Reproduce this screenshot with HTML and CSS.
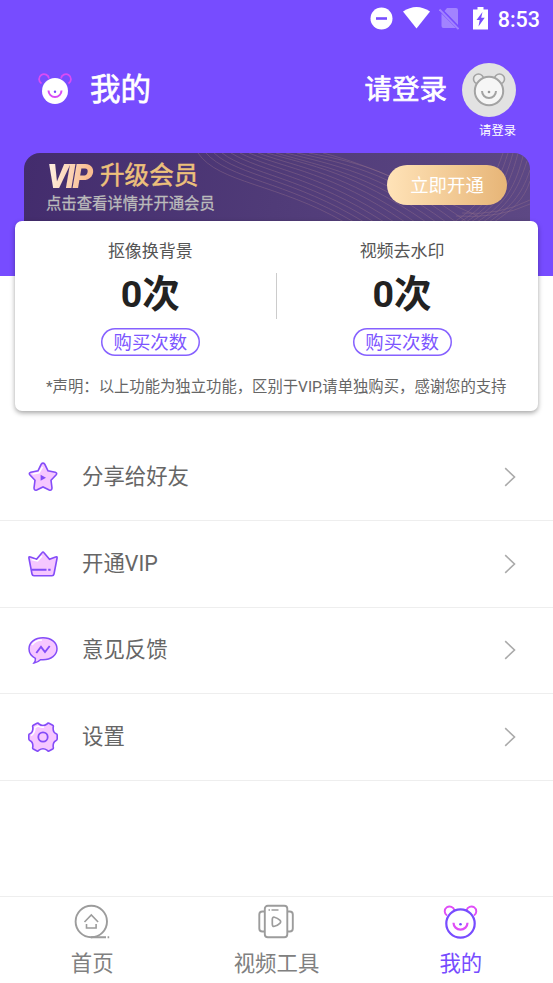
FILE: index.html
```html
<!DOCTYPE html>
<html lang="zh-CN">
<head>
<meta charset="utf-8">
<title>我的</title>
<link rel="stylesheet" href="styles.css">
</head>
<body>
<div class="hero">
  <div class="status">
    <svg class="dnd" width="23" height="23" viewBox="0 0 23 23"><circle cx="11.500" cy="11.500" r="11" fill="#fff"/><path d="M6 11.500h11" stroke="#774cff" stroke-width="2.600"/></svg>
    <svg class="wifi" width="27" height="22" viewBox="0 0 27 22"><path d="M0 4.500Q13.500-4.500 27 4.500L13.500 21.500z" fill="#fff"/></svg>
    <svg class="sim" width="20" height="24" viewBox="0 0 20 24"><path d="M8 2h9q2 0 2 2v15L5.500 5zM2.500 7.500L17 22H4.500q-2 0-2-2z" fill="#a283ff"/><path d="M.5 3.500l19 19.500" stroke="#a283ff" stroke-width="1.800"/></svg>
    <svg class="battery" width="15" height="23" viewBox="0 0 15 23"><path d="M0 2.500h4.500V0h6v2.500H15V22.500H0z" fill="#fff"/><path d="M9.500 5L3.500 13h3.200L5.500 19.500l6.200-8.800H8.200z" fill="#774cff"/></svg>
    <span class="time">8:53</span>
  </div>
  <header class="header">
    <svg class="logo" width="34" height="34" viewBox="0 0 34 34" fill="none"><g stroke="#d94cf5" stroke-width="1.800"><path d="M3.500 11.500A5 5 0 1 1 11 6.500M30.500 11.500A5 5 0 1 0 23 6.500"/></g><circle cx="17" cy="19" r="13" fill="#fff"/><path d="M10.500 18.500a6.500 6.500 0 0 0 13 0" stroke="#d94cf5" stroke-width="2"/><circle cx="17" cy="19.700" r="1.200" fill="#774cff"/></svg>
    <h1 class="title">我的</h1>
    <span class="login">请登录</span>
    <div class="avatar-box">
      <svg width="54" height="54" viewBox="0 0 54 54" fill="none"><circle cx="27" cy="27" r="27" fill="#e2e2e2"/><g fill="#ececec" stroke="#a3a3a3" stroke-width="1.600"><circle cx="16.500" cy="16" r="5"/><circle cx="37.500" cy="16" r="5"/><circle cx="27" cy="28" r="14.200" fill="#f6f6f6" stroke-width="2"/></g><path d="M20 28a7 7 0 0 0 14 0" stroke="#a3a3a3" stroke-width="2"/><circle cx="27" cy="29" r="1.300" fill="#999"/></svg>
      <span class="avatar-label">请登录</span>
    </div>
  </header>
  <section class="banner">
    <svg class="waves" width="506" height="68" viewBox="0 0 506 68" fill="none" stroke="#95738c" stroke-opacity=".4">
      <path d="M174 0C194 30 255 31 320 69M182 0C205 26 260 28 330 69M190 0C215 23 270 26 340 69M198 0C226 21 280 25 350 69M207 0C238 19 289 23 360 69M216 0C249 17 298 21 370 69M225 0C263 16 307 19 381 69M234 0C276 15 320 20 391 69M243 0C285 12 330 19 402 69M252 0C300 14 345 21 412 69M262 0C310 12 355 20 422 69M273 0C320 10 365 19 432 69M285 0C337 10 375 20 443 69M299 0C350 13 390 35 454 63"/>
      <path d="M479 0C465 40 453 54 430 69M484 0C472 38 460 55 436 69M489 0C478 39 467 53 442 69M494 0C484 39 472 53 447 69M499 3C490 39 478 53 453 69M503 8C493 40 482 54 459 69M506 17C497 44 486 54 465 69M506 28C500 47 488 57 470 69M432 63Q474 66 506 51M438 60Q474 63 506 47"/>
    </svg>
    <div class="banner-copy">
      <div class="banner-title"><span class="vip">VIP</span><span>升级会员</span></div>
      <div class="banner-sub">点击查看详情并开通会员</div>
    </div>
    <button class="open">立即开通</button>
  </section>
</div>
<section class="card">
  <div class="counts">
    <div class="count"><span class="label">抠像换背景</span><strong>0次</strong><button>购买次数</button></div>
    <i class="divider"></i>
    <div class="count"><span class="label">视频去水印</span><strong>0次</strong><button>购买次数</button></div>
  </div>
  <p class="note">*声明：以上功能为独立功能，区别于VIP,请单独购买，感谢您的支持</p>
</section>
<main class="list">
  <div class="row">
    <svg class="icon" viewBox="0 0 30 30"><path d="M13.200 2.300Q15 0 16.800 2.300L20 8.900l7.200 1.300q2.500.8.800 2.800l-5 5.300 1 7.700q-.1 2.900-2.800 2L15 25l-6.200 3q-2.700.9-2.800-2l1-7.700-5-5.300q-1.700-2 .8-2.800L10 8.900z" fill="#f6c7ff" stroke="#844cf8" stroke-width="1.600"/><path d="M4.500 12l6.500-1.200 3.500-6" fill="none" stroke="#fff" stroke-width="1.500"/><path d="M12.600 12.800l5.400 3-5.400 3z" fill="#844cf8"/></svg>
    <span class="name">分享给好友</span><svg class="arrow" viewBox="0 0 12 20"><path d="M1.200 1.200l9.300 8.800-9.300 8.800"/></svg>
  </div>
  <div class="row">
    <svg class="icon" viewBox="0 0 30 30"><path d="M1 9.500q-.5-2.500 1.500-1.500l6 2.300L14 3.700q1-1.400 2 0l5.500 6.600 6-2.300q2-1 1.500 1.500L26 25q-.3 1.700-2 1.700H6Q4.300 26.700 4 25z" fill="#f6c7ff" stroke="#844cf8" stroke-width="1.600"/><path d="M3.500 10.500l6 1.500 4.500-5" fill="none" stroke="#fff" stroke-width="1.500"/><path d="M4 20.800h14.500M20.200 20.800h2.400" stroke="#844cf8" stroke-width="1.900"/></svg>
    <span class="name">开通VIP</span><svg class="arrow" viewBox="0 0 12 20"><path d="M1.200 1.200l9.300 8.800-9.300 8.800"/></svg>
  </div>
  <div class="row">
    <svg class="icon" viewBox="0 0 30 30"><path d="M15 2.800c8 0 14 4.700 14 11s-6 11-14 11h-2.500Q10 27.300 6 28q1.700-2.400 1.400-4.700C3.300 21.300 1 17.800 1 13.800c0-6.300 6-11 14-11z" fill="#f6c7ff" stroke="#844cf8" stroke-width="1.500"/><path d="M4 10Q7.500 5 14 5" fill="none" stroke="#fff" stroke-width="1.500"/><path d="M8.300 18l4.700-6.200 4 5.200 4.700-6" fill="none" stroke="#844cf8" stroke-width="1.900"/></svg>
    <span class="name">意见反馈</span><svg class="arrow" viewBox="0 0 12 20"><path d="M1.200 1.200l9.300 8.800-9.300 8.800"/></svg>
  </div>
  <div class="row">
    <svg class="icon" viewBox="0 0 30 30"><path d="M9 1.200q1.300-.5 2 .8 4 3 8 0 .7-1.300 2-.8l3.700 2q1 .6.500 2-.5 5 3 6.600 1 .3 1 1.300v4q0 1-1 1.300-3.500 1.600-3 6.600.5 1.400-.5 2l-3.700 2q-1.300.5-2-.8-4-3-8 0-.7 1.300-2 .8l-3.700-2q-1-.6-.5-2 .5-5-3-6.600-1-.3-1-1.300v-4q0-1 1-1.300 3.500-1.600 3-6.600-.5-1.400.5-2z" fill="#f6c7ff" stroke="#844cf8" stroke-width="1.600"/><path d="M3 13.500q3.500-1.500 4-8L10 4q3 2 6 1" fill="none" stroke="#fff" stroke-width="1.500"/><circle cx="15" cy="15" r="4.700" fill="#f6c7ff" stroke="#844cf8" stroke-width="1.800"/></svg>
    <span class="name">设置</span><svg class="arrow" viewBox="0 0 12 20"><path d="M1.200 1.200l9.300 8.800-9.300 8.800"/></svg>
  </div>
</main>
<nav class="tabs">
  <div class="tab">
    <svg width="36" height="36" viewBox="0 0 36 36" fill="none" stroke="#9c9c9c" stroke-width="1.900"><circle cx="17.300" cy="17.500" r="15.700"/><path d="M17 33.200h15M33.600 33.200h1.600"/><path d="M10.500 18l6.800-7 6.800 7M12.500 20v4h9.600v-4" stroke-width="1.600"/></svg>
    <span>首页</span>
  </div>
  <div class="tab">
    <svg width="36" height="36" viewBox="0 0 36 36" fill="none" stroke="#9c9c9c" stroke-width="1.900"><rect x="6.800" y="1.800" width="22.500" height="31.400" rx="3"/><path d="M6.800 7.500H4.300q-3 0-3 3v14q0 3 3 3h2.500M29.300 7.500h2.500q3 0 3 3v14q0 3-3 3h-2.500"/><path d="M10.500 6h1.500M13.500 6h7" stroke-width="1.600"/><path d="M14.300 15.500q0-2.800 2.200-2.200 3 .8 5.300 2.900 1.700 1.600 0 3.200-2.300 2.100-5.300 2.900-2.200.6-2.200-2.200z" stroke-width="1.700"/></svg>
    <span>视频工具</span>
  </div>
  <div class="tab active">
    <svg width="36" height="36" viewBox="0 0 36 36" fill="none"><g stroke="#df4df7" stroke-width="1.900"><path d="M4 11.500A4.900 4.900 0 1 1 11.400 6.300M31 11.500A4.900 4.900 0 1 0 23.600 6.300"/><path d="M10.500 18.700a7 7 0 0 0 14 0" stroke-width="2.200"/></g><circle cx="17.500" cy="19.500" r="14.200" stroke="#774cff" stroke-width="2.200"/><circle cx="17.500" cy="20.300" r="1.300" fill="#774cff"/></svg>
    <span>我的</span>
  </div>
</nav>
</body>
</html>
```
FILE: styles.css
```css
* { box-sizing: border-box; }
body {
  margin: 0;
  height: 983px;
  display: flex;
  flex-direction: column;
  overflow: hidden;
  background: #fff;
  font-family: Roboto, "Noto Sans CJK SC", sans-serif;
  color: #666;
}
svg { display: block; flex: none; }
button { font: inherit; padding: 0; border: 0; background: none; }
.hero { height: 276px; flex: none; background: #774cff; color: #fff; }
.status { height: 38px; padding: 0 13px 2px 370px; display: flex; align-items: center; }
.wifi { margin-left: 10px; }
.sim { margin-left: 9px; }
.battery { margin-left: 14px; }
.time { margin-left: auto; font-size: 21.500px; font-weight: 500; line-height: 36px; padding-top: 3px; }
.header { height: 115px; padding: 0 37px 0 38px; display: flex; }
.logo { margin-top: 34px; }
.title { margin: 30px 0 0 18px; font-size: 30.500px; line-height: 44px; font-weight: 400; -webkit-text-stroke: .7px #fff; }
.login { margin: 30px 15px 0 auto; font-size: 27.500px; line-height: 44px; -webkit-text-stroke: .7px #fff; }
.avatar-box { margin-top: 25px; display: flex; flex-direction: column; align-items: flex-end; }
.avatar-label { font-size: 12.300px; line-height: 18px; margin-top: 5px; }
.banner {
  position: relative;
  margin: 0 23px 0 24px;
  height: 68px;
  padding: 9px 23px 0 22px;
  display: flex;
  justify-content: space-between;
  border-radius: 16px 16px 0 0;
  background: linear-gradient(100deg, #432c6d, #503b78 50%, #5d4884);
  overflow: hidden;
}
.waves { position: absolute; inset: 0; }
.banner-copy, .open { position: relative; }
.banner-title { display: flex; font-size: 24.600px; line-height: 28px; color: #edc17b; -webkit-text-stroke: .5px #edc17b; }
.vip {
  width: 54px;
  padding-left: 1px;
  font: italic 900 33px/30px Roboto, sans-serif;
  letter-spacing: -2.700px;
  height: 28px;
  -webkit-text-stroke: 0;
  color: transparent;
  background: linear-gradient(100deg, #fff4e9, #f9bd91 75%);
  -webkit-background-clip: text;
  background-clip: text;
}
.banner-sub { font-size: 15.350px; line-height: 24px; margin-top: 2px; color: #bbb; -webkit-text-stroke: .3px #bbb; }
.open {
  width: 120px;
  height: 40px;
  margin-top: 3px;
  padding-top: 1px;
  border-radius: 20px;
  background: linear-gradient(90deg, #ffe3b8, #e7b577);
  color: #fff;
  font-size: 18.400px;
  line-height: 39px;
}
.card {
  position: relative;
  flex: none;
  height: 190px;
  margin: -55px 15px 0;
  padding: 0 10.500px 0 10px;
  border-radius: 7px;
  background: #fff;
  box-shadow: 0 2px 5px rgba(0, 0, 0, .36);
}
.counts { display: flex; }
.count { flex: 1; display: flex; flex-direction: column; align-items: center; padding-top: 18px; }
.label { font-size: 17px; line-height: 24px; color: #555; }
.count strong { font-size: 37.500px; line-height: 52px; margin-top: 5px; color: #222; font-weight: 700; }
.count button {
  width: 99px;
  height: 28px;
  margin-top: 8px;
  padding-top: 1px;
  box-shadow: inset 0 0 0 1.500px #8661ff;
  border-radius: 14px;
  color: #7c55ff;
  font-size: 18.400px;
  line-height: 27px;
}
.divider { width: 1px; height: 46px; margin-top: 52px; background: #ccc; }
.note { margin: 19px 0 0; text-align: center; white-space: nowrap; font-size: 15.350px; line-height: 24px; color: #666; }
.list { margin-top: 23.200px; }
.row { height: 86.700px; padding: 0 37px 0 28px; display: flex; align-items: center; border-bottom: 1px solid #eee; }
.icon { width: 30px; height: 30px; }
.name { margin-left: 24px; font-size: 21.400px; line-height: 32px; }
.arrow { width: 12px; height: 20px; margin-left: auto; fill: none; stroke: #aaa; stroke-width: 1.600; }
.tabs { height: 87px; margin-top: auto; flex: none; display: flex; border-top: 1px solid #eee; }
.tab { flex: 1; display: flex; flex-direction: column; align-items: center; padding-top: 7px; font-size: 21.400px; line-height: 32px; color: #808080; }
.tab span { margin-top: 8px; }
.tab.active { color: #774cff; }
```
